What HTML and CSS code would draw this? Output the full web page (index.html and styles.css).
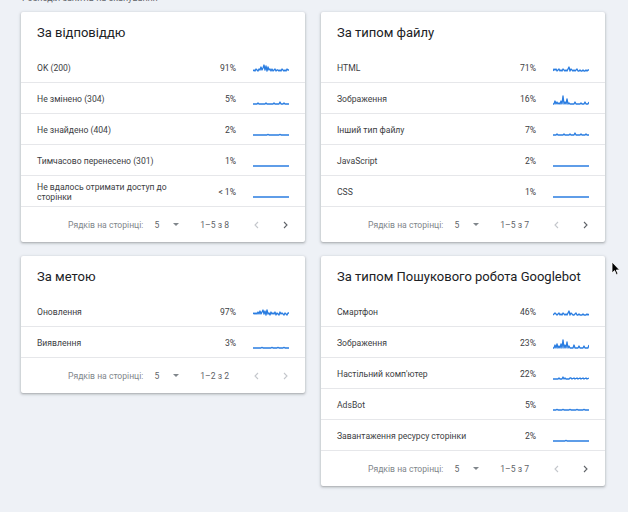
FILE: index.html
```html
<!DOCTYPE html>
<html lang="uk">
<head>
  <meta charset="UTF-8">
  <meta name="viewport" content="width=device-width, initial-scale=1.0">
  <link rel="stylesheet" href="styles.css">
  <title>Розподіл запитів на сканування</title>
</head>
<body>
  <div class="page">
    <div class="page-title">Розподіл запитів на сканування</div>

    <div class="cards">
      <div class="column">
        <div class="card">
          <h2>За відповіддю</h2>
          <div class="row">
            <span class="name">OK (200)</span>
            <span class="pct">91%</span>
            <svg class="spark" viewBox="0 0 36 10"><polyline points="0,7 1,6 2,7 3,5 4,6 5,7 6,5 7,6 8,3 9,6 10,4 11,1 12,6 13,2 14,7 15,3 16,6 17,5 18,7 19,5 20,7 21,6 22,5 23,7 24,6 25,6 26,7 27,6 28,7 29,5 30,6 31,7 32,6 33,7 34,5 35,6 36,6"/></svg>
          </div>
          <div class="row">
            <span class="name">Не змінено (304)</span>
            <span class="pct">5%</span>
            <svg class="spark" viewBox="0 0 36 10"><polyline points="0,9 4,9 5,8 6,9 12,9 13,8 14,9 20,9 21,8 22,9 26,9 27,7 28,9 30,9 31,8 32,9 36,9"/></svg>
          </div>
          <div class="row">
            <span class="name">Не знайдено (404)</span>
            <span class="pct">2%</span>
            <svg class="spark" viewBox="0 0 36 10"><polyline points="0,9 14,9 15,8.4 16,9 26,9 27,8.4 28,9 36,9"/></svg>
          </div>
          <div class="row">
            <span class="name">Тимчасово перенесено (301)</span>
            <span class="pct">1%</span>
            <svg class="spark" viewBox="0 0 36 10"><polyline points="0,9 36,9"/></svg>
          </div>
          <div class="row">
            <span class="name">Не вдалось отримати доступ до сторінки</span>
            <span class="pct">&lt; 1%</span>
            <svg class="spark" viewBox="0 0 36 10"><polyline points="0,9 36,9"/></svg>
          </div>
          <div class="pager">
            <span class="pager-label">Рядків на сторінці:</span>
            <span class="pager-size">5</span>
            <span class="pager-caret"></span>
            <span class="pager-range">1–5 з 8</span>
            <svg class="pager-btn off" viewBox="0 0 8 8"><polyline points="5,1 2,4 5,7"/></svg>
            <svg class="pager-btn" viewBox="0 0 8 8"><polyline points="3,1 6,4 3,7"/></svg>
          </div>
        </div>

        <div class="card">
          <h2>За метою</h2>
          <div class="row">
            <span class="name">Оновлення</span>
            <span class="pct">97%</span>
            <svg class="spark" viewBox="0 0 36 10"><polyline points="0,6 1,5 2,6 3,5 4,6 5,4 6,6 7,3 8,6 9,4 10,2 11,6 12,3 13,7 14,2 15,6 16,5 17,7 18,4 19,6 20,5 21,6 22,4 23,7 24,5 25,6 26,7 27,4 28,6 29,5 30,6 31,7 32,5 33,6 34,7 35,5 36,5"/></svg>
          </div>
          <div class="row">
            <span class="name">Виявлення</span>
            <span class="pct">3%</span>
            <svg class="spark" viewBox="0 0 36 10"><polyline points="0,9 8,9 9,8.4 10,9 18,9 19,8.4 20,9 24,9 25,8.4 26,9 30,9 31,8.4 32,9 36,9"/></svg>
          </div>
          <div class="pager">
            <span class="pager-label">Рядків на сторінці:</span>
            <span class="pager-size">5</span>
            <span class="pager-caret"></span>
            <span class="pager-range">1–2 з 2</span>
            <svg class="pager-btn off" viewBox="0 0 8 8"><polyline points="5,1 2,4 5,7"/></svg>
            <svg class="pager-btn off" viewBox="0 0 8 8"><polyline points="3,1 6,4 3,7"/></svg>
          </div>
        </div>
      </div>

      <div class="column">
        <div class="card">
          <h2>За типом файлу</h2>
          <div class="row">
            <span class="name">HTML</span>
            <span class="pct">71%</span>
            <svg class="spark" viewBox="0 0 36 10"><polyline points="0,7 1,5 2,6 3,5 4,7 5,6 6,5 7,7 8,6 9,7 10,5 11,6 12,7 13,6 14,7 15,5 16,3 17,7 18,5 19,6 20,7 21,6 22,7 23,6 24,5 25,7 26,7 27,6 28,7 29,7 30,6 31,7 32,7 33,6 34,7 35,6 36,6"/></svg>
          </div>
          <div class="row">
            <span class="name">Зображення</span>
            <span class="pct">16%</span>
            <svg class="spark" viewBox="0 0 36 10"><polyline points="0,9 1,9 2,6 3,9 4,7 5,9 6,8 7,9 8,6 9,9 10,1 11,9 12,7 13,9 14,4 15,9 16,8 17,9 21,9 22,7 23,9 27,9 28,8 29,9 31,9 32,7 33,9 35,9 36,7"/></svg>
          </div>
          <div class="row">
            <span class="name">Інший тип файлу</span>
            <span class="pct">7%</span>
            <svg class="spark" viewBox="0 0 36 10"><polyline points="0,9 3,9 4,8 5,9 10,9 11,8 12,9 16,9 17,8 18,9 21,9 22,7 23,9 27,9 28,8 29,9 32,9 33,8 34,9 36,9"/></svg>
          </div>
          <div class="row">
            <span class="name">JavaScript</span>
            <span class="pct">2%</span>
            <svg class="spark" viewBox="0 0 36 10"><polyline points="0,9 36,9"/></svg>
          </div>
          <div class="row">
            <span class="name">CSS</span>
            <span class="pct">1%</span>
            <svg class="spark" viewBox="0 0 36 10"><polyline points="0,9 36,9"/></svg>
          </div>
          <div class="pager">
            <span class="pager-label">Рядків на сторінці:</span>
            <span class="pager-size">5</span>
            <span class="pager-caret"></span>
            <span class="pager-range">1–5 з 7</span>
            <svg class="pager-btn off" viewBox="0 0 8 8"><polyline points="5,1 2,4 5,7"/></svg>
            <svg class="pager-btn" viewBox="0 0 8 8"><polyline points="3,1 6,4 3,7"/></svg>
          </div>
        </div>

        <div class="card">
          <h2>За типом Пошукового робота Googlebot</h2>
          <div class="row">
            <span class="name">Смартфон</span>
            <span class="pct">46%</span>
            <svg class="spark" viewBox="0 0 36 10"><polyline points="0,7 1,6 2,5 3,6 4,7 5,6 6,5 7,7 8,6 9,7 10,5 11,6 12,7 13,6 14,7 15,5 16,3 17,7 18,5 19,6 20,7 21,7 22,6 23,5 24,7 25,7 26,6 27,7 28,7 29,7 30,6 31,7 32,7 33,7 34,6 35,7 36,6"/></svg>
          </div>
          <div class="row">
            <span class="name">Зображення</span>
            <span class="pct">23%</span>
            <svg class="spark" viewBox="0 0 36 10"><polyline points="0,9 1,9 2,6 3,9 4,5 5,9 6,7 7,9 8,5 9,9 10,1 11,9 12,6 13,9 14,3 15,9 16,7 17,9 20,9 21,6 22,9 25,9 26,7 27,9 30,9 31,7 32,9 35,9 36,6"/></svg>
          </div>
          <div class="row">
            <span class="name">Настільний комп'ютер</span>
            <span class="pct">22%</span>
            <svg class="spark" viewBox="0 0 36 10"><polyline points="0,9 5,9 6,8 7,9 9,9 10,7 11,9 12,8 13,9 16,9 17,8 18,8 19,9 21,8 22,9 24,8 25,9 27,8 28,9 30,8 31,9 33,8 34,9 36,8"/></svg>
          </div>
          <div class="row">
            <span class="name">AdsBot</span>
            <span class="pct">5%</span>
            <svg class="spark" viewBox="0 0 36 10"><polyline points="0,9 3,9 4,8.4 5,9 9,9 10,8.4 11,9 16,9 17,8.4 18,9 23,9 24,8.4 25,9 30,9 31,8.4 32,9 36,9"/></svg>
          </div>
          <div class="row">
            <span class="name">Завантаження ресурсу сторінки</span>
            <span class="pct">2%</span>
            <svg class="spark" viewBox="0 0 36 10"><polyline points="0,9 12,9 13,8.4 14,9 36,9"/></svg>
          </div>
          <div class="pager">
            <span class="pager-label">Рядків на сторінці:</span>
            <span class="pager-size">5</span>
            <span class="pager-caret"></span>
            <span class="pager-range">1–5 з 7</span>
            <svg class="pager-btn off" viewBox="0 0 8 8"><polyline points="5,1 2,4 5,7"/></svg>
            <svg class="pager-btn" viewBox="0 0 8 8"><polyline points="3,1 6,4 3,7"/></svg>
          </div>
        </div>
      </div>
    </div>
  </div>

  <svg class="cursor" viewBox="0 0 10 15"><path d="M1,1 L1,12 L3.6,9.6 L5.4,13.8 L7,13.1 L5.3,9 L8.6,9 Z"/></svg>
</body>
</html>
```

FILE: styles.css
```css
body {
  font-family: Roboto, "Noto Sans", Arial, sans-serif;
  background-color: #eef1f6;
  margin: 0;
  color: #202124;
  overflow: hidden;
}

.page {
  padding: 0 0 20px 21px;
}

.page-title {
  font-size: 9px;
  line-height: 10px;
  color: #5f6368;
  margin: -7px 0 9px 1px;
}

.cards {
  display: flex;
  gap: 16px;
  align-items: flex-start;
}

.column {
  display: flex;
  flex-direction: column;
  gap: 14px;
  width: 284px;
}

.card {
  background-color: white;
  border-radius: 2px;
  box-shadow: 0 1px 2px rgba(60, 64, 67, 0.3), 0 1px 3px 1px rgba(60, 64, 67, 0.12);
}

h2 {
  margin: 0;
  height: 40px;
  line-height: 42px;
  padding-left: 16px;
  font-size: 13px;
  font-weight: 400;
  color: #202124;
}

.row {
  display: grid;
  grid-template-columns: 1fr auto 36px;
  column-gap: 17px;
  align-items: center;
  padding: 2px 16px 0;
  box-sizing: border-box;
  height: 31px;
  border-bottom: 1px solid #e6e7ea;
  font-size: 8.6px;
  line-height: 10px;
  color: #3c4043;
}

.name {
  max-width: 150px;
}

.pct {
  text-align: right;
}

.spark {
  width: 36px;
  height: 10px;
  margin-top: 2px;
}

.spark polyline {
  fill: none;
  stroke: #2a7de1;
  stroke-width: 1.3;
  stroke-linejoin: round;
}

.pager {
  display: flex;
  align-items: center;
  justify-content: flex-end;
  height: 35px;
  padding-right: 16px;
  font-size: 8.6px;
  color: #80868b;
}

.pager-size {
  margin-left: 11px;
  color: #5f6368;
}

.pager-caret {
  margin-left: 14px;
  width: 0;
  height: 0;
  border-left: 3.5px solid transparent;
  border-right: 3.5px solid transparent;
  border-top: 3.5px solid #80868b;
}

.pager-range {
  margin-left: 21px;
  color: #5f6368;
}

.pager-btn {
  width: 8px;
  height: 8px;
  margin-left: 24px;
}

.pager-btn + .pager-btn {
  margin-left: 20px;
}

.pager-btn polyline {
  fill: none;
  stroke: #5f6368;
  stroke-width: 1.1;
}

.pager-btn.off polyline {
  stroke: #c4c7cc;
}

.cursor {
  position: absolute;
  left: 611px;
  top: 261px;
  width: 10px;
  height: 15px;
}

.cursor path {
  fill: #000;
  stroke: #fff;
  stroke-width: 0.8;
}
```
